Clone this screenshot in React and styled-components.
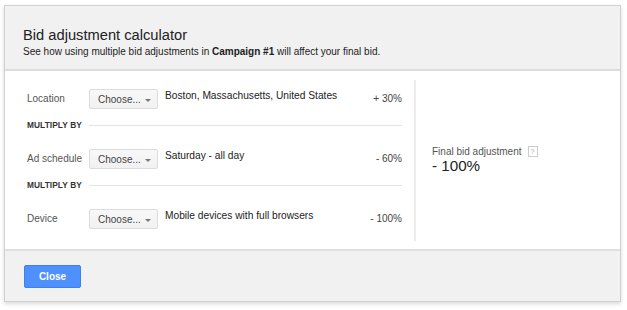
import React from 'react';
import styled, { createGlobalStyle } from 'styled-components';

const Global = createGlobalStyle`
  html, body {
    margin: 0;
    background: #fff;
    font-family: Arial, "Liberation Sans", sans-serif;
  }
`;

const Page = styled.div`
  padding: 5px 6px 6px 4px;
`;

const Dialog = styled.div`
  width: 615px;
  border: 1px solid #d0d0d0;
  box-shadow: 0 2px 4px rgba(0, 0, 0, 0.15);
  background: #fff;
`;

const Header = styled.div`
  background: #f1f1f1;
  border-bottom: 2px solid #dcdcdc;
  padding: 20px 18px 0 18px;
  height: 43px;
`;

const Title = styled.div`
  font-size: 14.7px;
  color: #222;
  line-height: 18px;
`;

const Sub = styled.div`
  font-size: 10px;
  color: #222;
  line-height: 15px;
  b { font-weight: bold; }
`;

const Body = styled.div`
  display: flex;
  padding: 9px 0 8px 0;
  height: 161px;
`;

const Left = styled.div`
  width: 375px;
  padding: 9px 12px 0 22px;
  border-right: 2px solid #ececec;
`;

const Row = styled.div`
  display: flex;
  align-items: flex-start;
  height: 30px;
`;

const Label = styled.div`
  width: 62px;
  font-size: 10px;
  color: #555;
  padding-top: 4px;
  white-space: nowrap;
`;

const Choose = styled.div`
  width: 59px;
  height: 18px;
  border: 1px solid #dcdcdc;
  border-radius: 2px;
  background: linear-gradient(#f8f8f8, #f1f1f1);
  font-size: 10px;
  color: #444;
  display: flex;
  align-items: center;
  padding-left: 8px;
  gap: 4px;
`;

const Caret = styled.span`
  width: 0;
  height: 0;
  border-left: 3px solid transparent;
  border-right: 3px solid transparent;
  border-top: 3px solid #777;
  margin-top: 2px;
`;

const Value = styled.div`
  flex: 1;
  font-size: 10.2px;
  color: #222;
  padding-left: 7px;
  margin-top: 1px;
`;

const Pct = styled.div`
  font-size: 10px;
  color: #444;
  padding-top: 4px;
  text-align: right;
`;

const Multiply = styled.div`
  display: flex;
  align-items: center;
  height: 30px;
  gap: 7px;
  font-size: 8.3px;
  font-weight: bold;
  color: #333;
  letter-spacing: 0.1px;
  margin-top: -9px;
  margin-bottom: 9px;
  &::after {
    content: '';
    flex: 1;
    border-top: 1px solid #e3e3e3;
  }
`;

const Right = styled.div`
  flex: 1;
  display: flex;
  flex-direction: column;
  justify-content: center;
  padding-left: 16px;
  padding-bottom: 2px;
`;

const FinalLabel = styled.div`
  display: flex;
  align-items: center;
  gap: 6px;
  font-size: 10px;
  color: #555;
`;

const Help = styled.span`
  width: 8px;
  height: 9px;
  border: 1px solid #ccc;
  font-size: 7px;
  color: #aaa;
  display: inline-flex;
  align-items: center;
  justify-content: center;
`;

const Final = styled.div`
  font-size: 15.2px;
  color: #222;
  line-height: 17px;
`;

const Footer = styled.div`
  background: #f1f1f1;
  border-top: 2px solid #e0e0e0;
  height: 52px;
  padding: 14px 0 0 19px;
  box-sizing: border-box;
`;

const CloseBtn = styled.button`
  width: 57px;
  height: 23px;
  background: #4d90fe;
  border: 1px solid #3f7fe8;
  border-radius: 2px;
  color: #fff;
  font-weight: bold;
  font-size: 10px;
  font-family: Arial, "Liberation Sans", sans-serif;
  padding: 0;
`;

const rows = [
  { label: 'Location', value: 'Boston, Massachusetts, United States', pct: '+ 30%' },
  { label: 'Ad schedule', value: 'Saturday - all day', pct: '- 60%' },
  { label: 'Device', value: 'Mobile devices with full browsers', pct: '- 100%' },
];

export default function App() {
  return (
    <Page>
      <Global />
      <Dialog>
        <Header>
          <Title>Bid adjustment calculator</Title>
          <Sub>
            See how using multiple bid adjustments in <b>Campaign #1</b> will affect your final bid.
          </Sub>
        </Header>
        <Body>
          <Left>
            {rows.map((r, i) => (
              <React.Fragment key={r.label}>
                {i > 0 && <Multiply>MULTIPLY BY</Multiply>}
                <Row>
                  <Label>{r.label}</Label>
                  <Choose>Choose... <Caret /></Choose>
                  <Value>{r.value}</Value>
                  <Pct>{r.pct}</Pct>
                </Row>
              </React.Fragment>
            ))}
          </Left>
          <Right>
            <FinalLabel>Final bid adjustment <Help>?</Help></FinalLabel>
            <Final>- 100%</Final>
          </Right>
        </Body>
        <Footer>
          <CloseBtn>Close</CloseBtn>
        </Footer>
      </Dialog>
    </Page>
  );
}
